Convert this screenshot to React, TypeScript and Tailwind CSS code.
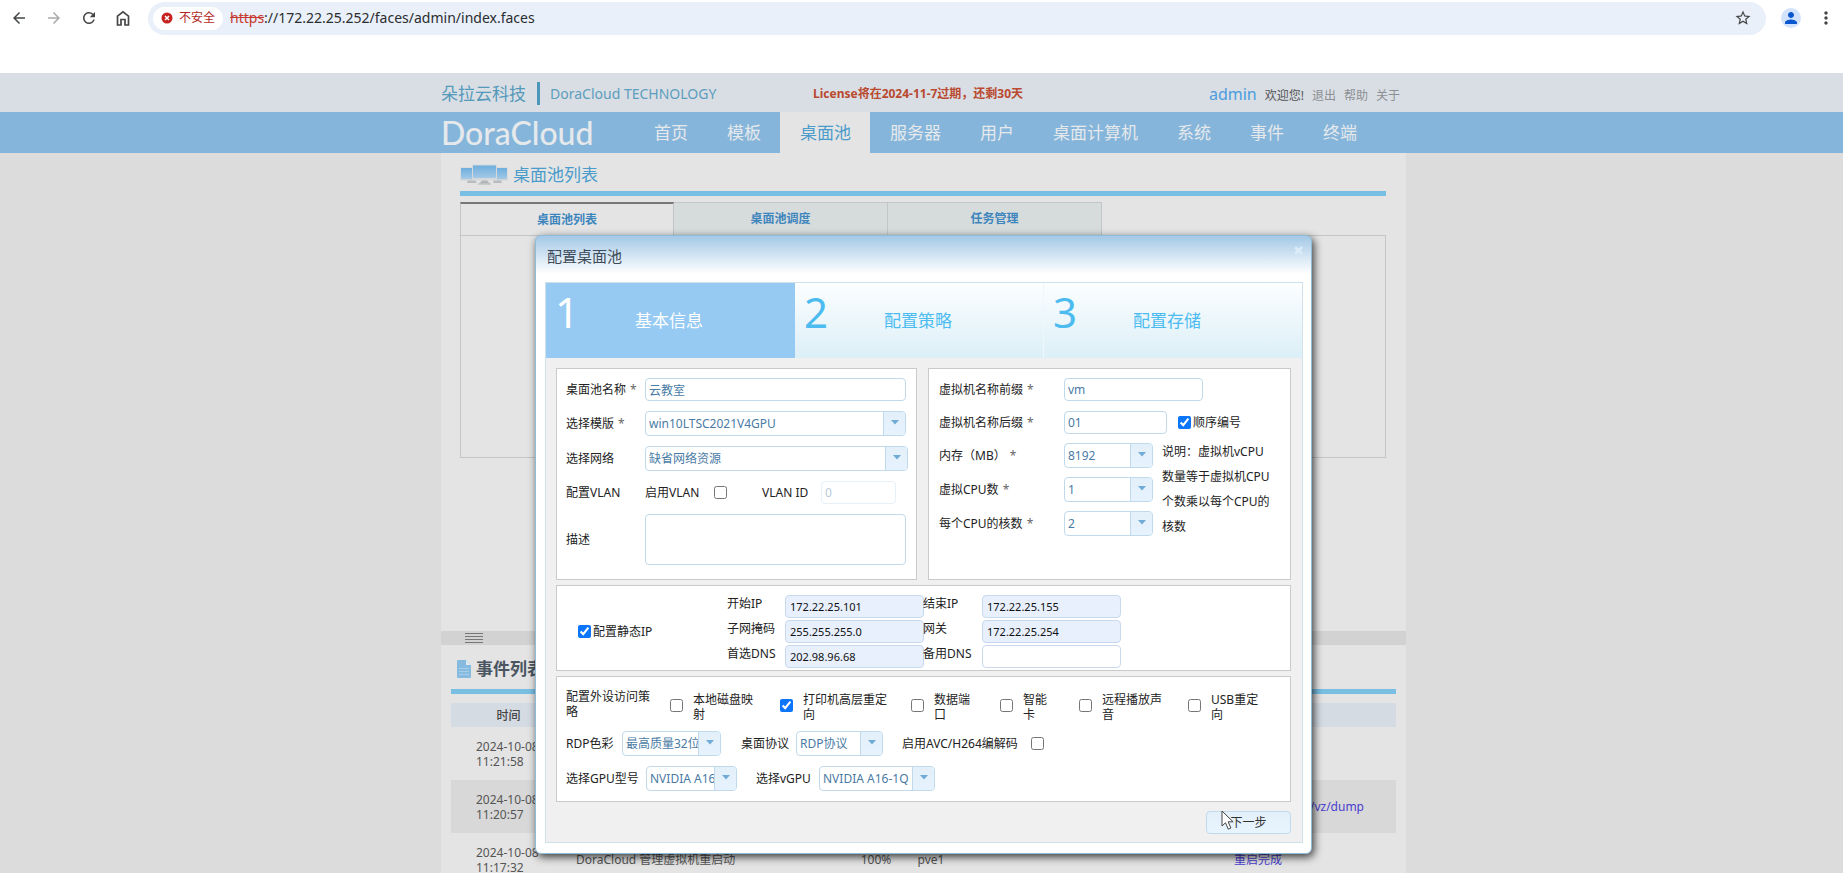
import { useState } from 'react'
import type { ReactNode } from 'react'
import clsx from 'clsx'
import { MdArrowBack, MdArrowForward, MdRefresh, MdStarBorder, MdPerson, MdMoreVert } from 'react-icons/md'

const NAV = ['首页', '模板', '桌面池', '服务器', '用户', '桌面计算机', '系统', '事件', '终端']
const TABS = ['桌面池列表', '桌面池调度', '任务管理']
const STEPS = ['基本信息', '配置策略', '配置存储']

const EVENTS = [
  { date: '2024-10-08', time: '11:21:58', text: '', progress: '', host: '', result: '' },
  { date: '2024-10-08', time: '11:20:57', text: '', progress: '', host: '', result: '/vz/dump' },
  { date: '2024-10-08', time: '11:17:32', text: 'DoraCloud 管理虚拟机重启动', progress: '100%', host: 'pve1', result: '重启完成' },
]

export default function App() {
  return (
    <div className="relative flex h-screen flex-col overflow-hidden bg-[#dcdcdc] font-['Noto_Sans','Noto_Sans_CJK_SC',sans-serif] text-xs text-[#444]">
      <BrowserBar />
      <Header />
      <NavBar />
      <main className="flex flex-1 justify-center pl-1">
        <div className="flex w-[965px] shrink-0 flex-col bg-[#e4e4e4]">
          <PoolList />
          <EventList />
        </div>
      </main>
      <div className="absolute inset-x-0 top-[235px] flex justify-center pl-1">
        <PoolDialog />
      </div>
    </div>
  )
}

function BrowserBar() {
  return (
    <div className="h-[73px] shrink-0 bg-white">
      <div className="flex h-[35px] items-center pt-px text-[#444746]">
        <div className="flex w-[148px] items-center gap-[17px] pl-2.5">
          <button aria-label="后退"><MdArrowBack size={18} /></button>
          <button aria-label="前进" className="text-[#a9abab]"><MdArrowForward size={18} /></button>
          <button aria-label="刷新"><MdRefresh size={18} /></button>
          <button aria-label="主页">
            <svg width="16" height="18" viewBox="0 0 16 18" fill="none" stroke="currentColor" strokeWidth="1.7">
              <path d="M2.5 7.2 8 2.8l5.500 4.400V16H10v-5.500H6V16H2.500z" />
            </svg>
          </button>
        </div>
        <div className="flex h-[33px] flex-1 items-center rounded-full bg-[#e9f0f9] pr-3.5 pl-[5px]">
          <button className="flex h-[23px] items-center gap-1.5 rounded-full bg-white px-2 text-[#b3261e]">
            <svg width="12" height="12" viewBox="0 0 12 12">
              <circle cx="6" cy="6" r="5.500" fill="#c5221f" />
              <path d="M4 4l4 4M8 4l-4 4" stroke="#fff" strokeWidth="1.500" />
            </svg>
            不安全
          </button>
          <div className="flex-1 pl-[7px] text-sm leading-5 text-[#2b2d2f]">
            <span className="text-[#c5392f] line-through">https</span>://172.22.25.252/faces/admin/index.faces
          </div>
          <button aria-label="收藏"><MdStarBorder size={18} /></button>
        </div>
        <button aria-label="用户" className="mr-[15px] ml-[15px] flex size-5 items-center justify-center rounded-full bg-[#d3e3fd] text-[#0b57d0]">
          <MdPerson size={18} />
        </button>
        <button aria-label="更多" className="mr-[7px]"><MdMoreVert size={20} /></button>
      </div>
    </div>
  )
}

function Header() {
  return (
    <header className="flex h-[39px] shrink-0 justify-center bg-[#d9dee4] pl-1">
      <div className="flex w-[965px] shrink-0 items-center pt-0.5">
        <span className="text-[17px] leading-6 text-[#5499ba]">朵拉云科技</span>
        <span className="mr-2.5 ml-[11px] h-[23px] w-[3px] bg-[#4d97bb]" />
        <span className="w-[263px] text-sm leading-6 text-[#5c9dbd]">DoraCloud TECHNOLOGY</span>
        <span className="text-xs font-bold text-[#b9492f]">License将在2024-11-7过期，还剩30天</span>
        <div className="ml-auto flex items-baseline gap-2 pr-1.5">
          <a href="#" className="text-base text-[#4a9ce0]">admin</a>
          <span className="text-[#555]">欢迎您!</span>
          <a href="#" className="text-[#8c8f93]">退出</a>
          <a href="#" className="text-[#8c8f93]">帮助</a>
          <a href="#" className="text-[#8c8f93]">关于</a>
        </div>
      </div>
    </header>
  )
}

function NavBar() {
  return (
    <nav className="flex h-[41px] shrink-0 justify-center bg-[#85b5da] pl-1">
      <div className="flex w-[965px] shrink-0">
        <span className="w-[193px] font-['Lato',sans-serif] text-[32px] leading-[42px] font-medium text-[#e6e9ec]">DoraCloud</span>
        {NAV.map((item) => (
          <a
            key={item}
            href="#"
            className={clsx(
              'pr-[19px] pl-5 text-[17px] leading-[41px]',
              item === '桌面池' ? 'bg-[#e4e4e4] text-[#4b9ccb]' : 'text-[#e6e9ec]',
            )}
          >
            {item}
          </a>
        ))}
      </div>
    </nav>
  )
}

function PoolList() {
  return (
    <section className="h-[478px] shrink-0 pr-5 pl-[19px]">
      <div className="flex h-[38px] items-center gap-1 pt-1.5">
        <MonitorsIcon />
        <h1 className="text-[17px] leading-6 text-[#4b9ccb]">桌面池列表</h1>
      </div>
      <div className="h-[5px] bg-[#79bfe4]" />
      <div className="mt-1.5 flex h-[33px]">
        {TABS.map((tab, i) => (
          <button
            key={tab}
            className={clsx(
              'w-[214px] border-t border-r border-[#c3c6c6] text-xs font-bold text-[#3d85bd]',
              i === 0 ? 'border-l border-t-2 border-t-[#777]' : 'bg-[#d6dbdc]',
            )}
          >
            {tab}
          </button>
        ))}
      </div>
      <div className="h-[223px] border border-[#c3c6c6]" />
    </section>
  )
}

function MonitorsIcon() {
  return (
    <svg width="49" height="22" viewBox="0 0 49 22" className="shrink-0">
      <defs>
        <linearGradient id="screen" x1="0" y1="0" x2="0" y2="1">
          <stop offset="0" stopColor="#6eaede" />
          <stop offset="1" stopColor="#a3c9e6" />
        </linearGradient>
      </defs>
      <path d="M8 16h7l2 3H7zM34 16h7l1 3h-9z" fill="#b9bcbe" />
      <rect x="0.500" y="3.500" width="14" height="13" fill="#cfd3d6" />
      <rect x="1" y="4" width="12" height="11" fill="url(#screen)" />
      <rect x="34.500" y="3.500" width="13" height="13" fill="#cfd3d6" />
      <rect x="36" y="4" width="11" height="11" fill="url(#screen)" />
      <rect x="12" y="0.500" width="25" height="16" fill="#d5d9db" />
      <rect x="13" y="1.500" width="23" height="12.500" fill="url(#screen)" />
      <path d="M22 16.500h5l3 3H19z" fill="#b3b6b8" />
      <path d="M18 20h13" stroke="#b0b3b5" />
    </svg>
  )
}

function EventList() {
  return (
    <section className="flex-1">
      <div className="flex h-3.5 items-center bg-[#d2d2d2] pl-6">
        <svg width="19" height="11" viewBox="0 0 19 11" stroke="#777" strokeWidth="1">
          <path d="M0 .5h18M0 3.500h18M0 6.500h18M0 9.500h18" />
        </svg>
      </div>
      <div className="px-2.5">
        <div className="flex h-11 items-center gap-[5px] pt-1 pl-1.5">
          <svg width="14" height="18" viewBox="0 0 14 18">
            <path d="M1 0h8l5 5v12a1 1 0 0 1-1 1H1a1 1 0 0 1-1-1V1a1 1 0 0 1 1-1z" fill="#86badf" />
            <path d="M9 0v5h5z" fill="#dfeaf3" />
            <path d="M2 8.500h10M2 11.500h10M2 14.500h10" stroke="#a9cee9" />
          </svg>
          <h2 className="text-[17px] leading-6 font-bold text-[#4a5561]">事件列表</h2>
        </div>
        <div className="h-[5px] bg-[#79bfe4]" />
        <table className="mt-[9px] w-full table-fixed border-collapse text-left text-xs leading-[15px] text-[#555]">
          <colgroup>
            <col className="w-[115px]" />
            <col className="w-[280px]" />
            <col className="w-[60px]" />
            <col className="w-[50px]" />
            <col />
          </colgroup>
          <thead>
            <tr className="h-6 bg-[#d5dbe3]">
              <th className="text-center font-medium text-[#444]">时间</th>
              <th colSpan={4} />
            </tr>
          </thead>
          <tbody>
            {EVENTS.map((e, i) => (
              <tr key={e.time} className={clsx('h-[53px]', i === 1 && 'bg-[#d8d8d8]')}>
                <td className="pl-[25px]">{e.date}<br />{e.time}</td>
                <td className="pl-2.5">{e.text}</td>
                <td className="text-center">{e.progress}</td>
                <td className="text-center">{e.host}</td>
                <td className={i === 1 ? 'pr-8 text-right' : 'pr-[114px] text-right'}>
                  {e.result && <a href="#" className="text-[#4a3fd0]">{e.result}</a>}
                </td>
              </tr>
            ))}
          </tbody>
        </table>
      </div>
    </section>
  )
}

const field = 'rounded-[4px] border border-[#c0daec] pl-[3px] text-xs text-[#4a7ba5] outline-none'

function TextBox({ id, value, className = '', disabled = false }: { id: string; value: string; className?: string; disabled?: boolean }) {
  return <input id={id} defaultValue={value} disabled={disabled} className={clsx(field, 'h-[23px] bg-white', className)} />
}

function SelectBox({ id, value, className }: { id: string; value: string; className: string }) {
  return (
    <span className={clsx('relative flex h-[25px] shrink-0', className)}>
      <select id={id} className={clsx(field, 'w-full appearance-none bg-white pr-[22px]')}>
        <option>{value}</option>
      </select>
      <span className="pointer-events-none absolute inset-y-px right-px flex w-[22px] justify-center rounded-r-[3px] border-l border-[#c0daec] bg-linear-to-b from-[#e3f0fa] to-[#e6f2fd] pt-2">
        <svg width="8" height="5" viewBox="0 0 8 5"><path d="M0 0h8L4 4.500z" fill="#6fabd6" /></svg>
      </span>
    </span>
  )
}

function CheckBox({ id, checked = false, className = '' }: { id: string; checked?: boolean; className?: string }) {
  return <input id={id} type="checkbox" defaultChecked={checked} className={clsx('size-[13px] shrink-0 accent-[#0b75fb]', className)} />
}

function Label({ htmlFor, required = false, className = '', children }: { htmlFor: string; required?: boolean; className?: string; children: ReactNode }) {
  return (
    <label htmlFor={htmlFor} className={clsx('shrink-0 whitespace-nowrap text-[#222]', className)}>
      {children}
      {required && <span className="ml-1 text-[#666]">*</span>}
    </label>
  )
}

const box = 'border border-[#cacaca] bg-white'

function PoolDialog() {
  const [step, setStep] = useState(0)

  return (
    <div role="dialog" aria-label="配置桌面池" className="w-[777px] shrink-0 rounded-md border border-[#8fbcd9] bg-white bg-linear-to-b from-[#a3c8e6] to-white to-[38px] bg-no-repeat pr-2 pb-2.5 pl-[9px] shadow-[2px_3px_9px_rgba(0,0,0,0.75)]">
      <div className="flex h-[46px] justify-between">
        <h2 className="pt-2 pl-0.5 text-[15px] leading-6 text-[#3d4a57]">配置桌面池</h2>
        <button aria-label="关闭" className="flex w-2.5 justify-center self-start pt-2.5">
          <svg width="9" height="9" viewBox="0 0 8 8" stroke="#dcebf8" strokeWidth="2.500" className="shrink-0">
            <path d="M1 1l6 6M7 1L1 7" />
          </svg>
        </button>
      </div>
      <div className="border border-[#cfe2ec] bg-[#f0f0f0]">
        <div className="flex h-[75px] bg-linear-to-b from-[#fcfeff] to-[#dceff7]">
          {STEPS.map((name, i) => (
            <button
              key={name}
              onClick={() => setStep(i)}
              className={clsx(
                'flex w-[249px] pl-[9px] text-left',
                i === step ? 'bg-[#96caf2] text-white' : 'text-[#4cbcf0]',
                i === 1 && 'border-r border-[#eef8fc]',
              )}
            >
              <span className="w-20 text-[42px] leading-[58px]">{i + 1}</span>
              <span className="pt-[26px] text-[17px] leading-6">{name}</span>
            </button>
          ))}
        </div>
        <form className="flex flex-col gap-[5px] pt-2.5 pr-[11px] pb-2 pl-2.5" onSubmit={(e) => e.preventDefault()}>
          <div className="flex gap-[11px]">
            <BasicFields />
            <MachineFields />
          </div>
          <StaticIpFields />
          <DeviceFields />
          <div className="mt-1 flex justify-end">
            <button type="submit" className="relative h-[23px] w-[85px] rounded-[4px] border border-[#c0daec] bg-linear-to-b from-[#e3f0fa] to-[#e8f4fe] text-[#333]">
              下一步
              <svg width="14" height="21" viewBox="0 0 14 21" className="absolute -top-0.5 left-3.5">
                <path d="M1 1v15l3.500-3.200 2.800 6.400 2.600-1.200-2.800-6.200h5z" fill="#fff" stroke="#444" />
              </svg>
            </button>
          </div>
        </form>
      </div>
    </div>
  )
}

function BasicFields() {
  return (
    <fieldset className={clsx(box, 'grid h-[212px] w-[361px] grid-cols-[79px_1fr] content-start items-center gap-y-2.5 pt-[9px] pl-[9px]')}>
      <Label htmlFor="name" required>桌面池名称</Label>
      <TextBox id="name" value="云教室" className="w-[261px]" />
      <Label htmlFor="template" required>选择模版</Label>
      <SelectBox id="template" value="win10LTSC2021V4GPU" className="w-[261px]" />
      <Label htmlFor="network">选择网络</Label>
      <SelectBox id="network" value="缺省网络资源" className="w-[263px]" />
      <Label htmlFor="vlan">配置VLAN</Label>
      <div className="flex items-center">
        <Label htmlFor="vlan" className="w-[69px]">启用VLAN</Label>
        <CheckBox id="vlan" />
        <Label htmlFor="vlanId" className="ml-[35px] w-[59px]">VLAN ID</Label>
        <TextBox id="vlanId" value="0" disabled className="w-[75px] opacity-40" />
      </div>
      <Label htmlFor="desc">描述</Label>
      <textarea id="desc" className={clsx(field, 'h-[51px] w-[261px] resize-none bg-white')} />
    </fieldset>
  )
}

function MachineFields() {
  return (
    <fieldset className={clsx(box, 'h-[212px] flex-1 pt-[9px] pl-2.5')}>
      <div className="grid grid-cols-[125px_1fr] items-center gap-y-2.5">
        <Label htmlFor="prefix" required>虚拟机名称前缀</Label>
        <TextBox id="prefix" value="vm" className="w-[139px]" />
        <Label htmlFor="suffix" required>虚拟机名称后缀</Label>
        <div className="flex items-center">
          <TextBox id="suffix" value="01" className="w-[103px]" />
          <CheckBox id="ordered" checked className="ml-[11px]" />
          <Label htmlFor="ordered" className="ml-0.5">顺序编号</Label>
        </div>
      </div>
      <div className="mt-[9px] flex">
        <div className="grid w-[223px] grid-cols-[125px_1fr] content-start items-center gap-y-[9px]">
          <Label htmlFor="memory" required>内存（MB）</Label>
          <SelectBox id="memory" value="8192" className="w-[89px]" />
          <Label htmlFor="cpus" required>虚拟CPU数</Label>
          <SelectBox id="cpus" value="1" className="w-[89px]" />
          <Label htmlFor="cores" required>每个CPU的核数</Label>
          <SelectBox id="cores" value="2" className="w-[89px]" />
        </div>
        <p className="-mt-1 leading-[25px] text-[#222]">
          说明：虚拟机vCPU<br />数量等于虚拟机CPU<br />个数乘以每个CPU的<br />核数
        </p>
      </div>
    </fieldset>
  )
}

const ADDRESSES = [
  ['开始IP', '172.22.25.101', '结束IP', '172.22.25.155'],
  ['子网掩码', '255.255.255.0', '网关', '172.22.25.254'],
  ['首选DNS', '202.98.96.68', '备用DNS', ''],
]

function AddressBox({ id, value }: { id: string; value: string }) {
  return (
    <input
      id={id}
      defaultValue={value}
      className={clsx('h-[23px] w-[139px] rounded-[4px] border border-[#c8d9ec] px-1 text-[11px] text-[#111]', value ? 'bg-[#e8f0fe]' : 'bg-white')}
    />
  )
}

function StaticIpFields() {
  return (
    <fieldset className={clsx(box, 'flex h-[86px] items-start pt-[9px] pl-[21px]')}>
      <div className="flex w-[149px] items-center gap-0.5 self-center">
        <CheckBox id="staticIp" checked />
        <Label htmlFor="staticIp">配置静态IP</Label>
      </div>
      <div className="grid grid-cols-[58px_138px_59px_139px] gap-y-0.5">
        {ADDRESSES.map(([l1, v1, l2, v2]) => (
          <div key={l1} className="contents">
            <Label htmlFor={l1} className="leading-[18px]">{l1}</Label>
            <AddressBox id={l1} value={v1} />
            <Label htmlFor={l2} className="leading-[18px]">{l2}</Label>
            <AddressBox id={l2} value={v2} />
          </div>
        ))}
      </div>
    </fieldset>
  )
}

const DEVICES = [
  { lines: ['本地磁盘映', '射'], width: 'w-[110px]' },
  { lines: ['打印机高层重定', '向'], width: 'w-[131px]', checked: true },
  { lines: ['数据端', '口'], width: 'w-[89px]' },
  { lines: ['智能', '卡'], width: 'w-[79px]' },
  { lines: ['远程播放声', '音'], width: 'w-[109px]' },
  { lines: ['USB重定', '向'], width: 'w-[80px]' },
]

function DeviceFields() {
  return (
    <fieldset className={clsx(box, 'h-[126px] pt-3 pl-[9px]')}>
      <div className="flex h-8 items-center">
        <span className="w-[104px] shrink-0 self-start leading-[15px] text-[#222]">配置外设访问策<br />略</span>
        {DEVICES.map((d) => (
          <div key={d.lines[0]} className={clsx('flex shrink-0 items-center gap-2.5', d.width)}>
            <CheckBox id={d.lines[0]} checked={d.checked} />
            <label htmlFor={d.lines[0]} className="pt-1 leading-[15px] whitespace-nowrap text-[#222]">{d.lines[0]}<br />{d.lines[1]}</label>
          </div>
        ))}
      </div>
      <div className="mt-2.5 flex items-center">
        <Label htmlFor="color" className="w-14">RDP色彩</Label>
        <SelectBox id="color" value="最高质量32位" className="w-[99px]" />
        <Label htmlFor="protocol" className="ml-5 w-[55px]">桌面协议</Label>
        <SelectBox id="protocol" value="RDP协议" className="w-[87px]" />
        <Label htmlFor="avc" className="ml-[19px] w-[129px]">启用AVC/H264编解码</Label>
        <CheckBox id="avc" />
      </div>
      <div className="mt-2.5 flex items-center">
        <Label htmlFor="gpu" className="w-20">选择GPU型号</Label>
        <SelectBox id="gpu" value="NVIDIA A16" className="w-[91px]" />
        <Label htmlFor="vgpu" className="ml-[19px] w-[63px]">选择vGPU</Label>
        <SelectBox id="vgpu" value="NVIDIA A16-1Q" className="w-[116px]" />
      </div>
    </fieldset>
  )
}
